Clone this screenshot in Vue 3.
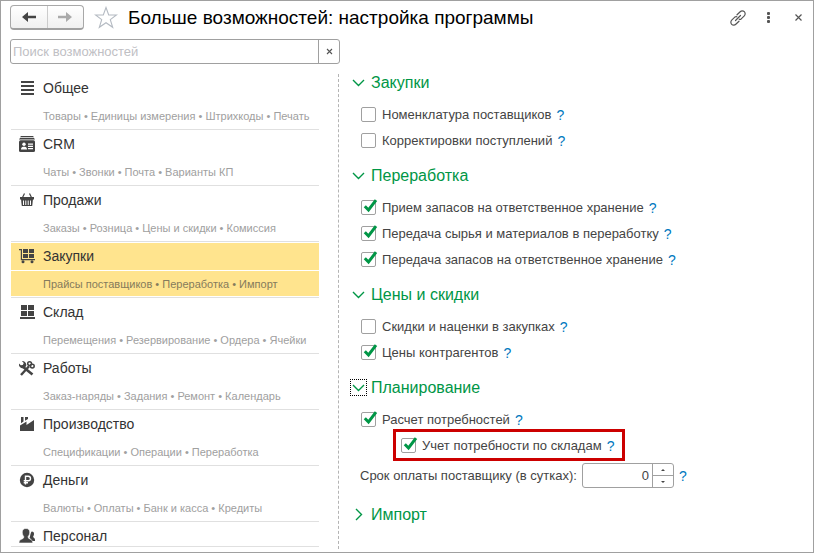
<script setup>
import { ref, reactive } from 'vue'

const query = ref('')
const active = ref('purchases')
const term = ref(0)

const categories = [
  { id: 'common', title: 'Общее', topics: ['Товары', 'Единицы измерения', 'Штрихкоды', 'Печать'] },
  { id: 'crm', title: 'CRM', topics: ['Чаты', 'Звонки', 'Почта', 'Варианты КП'] },
  { id: 'sales', title: 'Продажи', topics: ['Заказы', 'Розница', 'Цены и скидки', 'Комиссия'] },
  { id: 'purchases', title: 'Закупки', topics: ['Прайсы поставщиков', 'Переработка', 'Импорт'] },
  { id: 'stock', title: 'Склад', topics: ['Перемещения', 'Резервирование', 'Ордера', 'Ячейки'] },
  { id: 'works', title: 'Работы', topics: ['Заказ-наряды', 'Задания', 'Ремонт', 'Календарь'] },
  { id: 'production', title: 'Производство', topics: ['Спецификации', 'Операции', 'Переработка'] },
  { id: 'money', title: 'Деньги', topics: ['Валюты', 'Оплаты', 'Банк и касса', 'Кредиты'] },
  { id: 'staff', title: 'Персонал', topics: [] }
]

const sections = reactive([
  {
    id: 'buy', title: 'Закупки', open: true,
    options: [
      { id: 'nomenclature', label: 'Номенклатура поставщиков', on: false },
      { id: 'corrections', label: 'Корректировки поступлений', on: false }
    ]
  },
  {
    id: 'processing', title: 'Переработка', open: true,
    options: [
      { id: 'accept', label: 'Прием запасов на ответственное хранение', on: true },
      { id: 'raw', label: 'Передача сырья и материалов в переработку', on: true },
      { id: 'transfer', label: 'Передача запасов на ответственное хранение', on: true }
    ]
  },
  {
    id: 'prices', title: 'Цены и скидки', open: true,
    options: [
      { id: 'discounts', label: 'Скидки и наценки в закупках', on: false },
      { id: 'partner-prices', label: 'Цены контрагентов', on: true }
    ]
  },
  {
    id: 'planning', title: 'Планирование', open: true, current: true, hasTerm: true,
    options: [
      { id: 'needs', label: 'Расчет потребностей', on: true },
      { id: 'needs-by-stock', label: 'Учет потребности по складам', on: true, nested: true }
    ]
  },
  { id: 'import', title: 'Импорт', open: false, options: [] }
])
</script>

<template>
  <div class="window">
    <header class="titlebar">
      <div class="history">
        <button type="button" aria-label="Назад">
          <svg width="14" height="12" viewBox="0 0 14 12"><path d="M0 6 6 1v3.8h8v2.4H6V11z" fill="#444" /></svg>
        </button>
        <button type="button" aria-label="Вперед">
          <svg width="14" height="12" viewBox="0 0 14 12"><path d="M14 6 8 1v3.8H0v2.4h8V11z" fill="#aaa" /></svg>
        </button>
      </div>
      <button type="button" class="star" aria-label="В избранное">
        <svg width="24" height="23" viewBox="0 0 24 23">
          <path d="M12 1.5 14.7 9H22.5L16.3 13.6 18.7 21.3 12 16.7 5.3 21.3 7.7 13.6 1.5 9H9.3z" fill="#fff" stroke="#b4bac2" stroke-width="1.1" />
        </svg>
      </button>
      <h1>Больше возможностей: настройка программы</h1>
      <div class="tools">
        <button type="button" aria-label="Ссылка">
          <svg width="16" height="16" viewBox="0 0 16 16" fill="none" stroke="#555" stroke-width="1.2" stroke-linecap="round">
            <path d="M7 4.8 10.2 1.7A2.8 2.8 0 0 1 14.3 5.8L11.2 8.9Q10.2 9.6 9.2 9.2" />
            <path d="M9 11.2 5.8 14.3A2.8 2.8 0 0 1 1.7 10.2L4.8 7.1Q5.800 6.400 6.800 6.800" />
            <path d="M5.500 10.500 10.500 5.500" />
          </svg>
        </button>
        <button type="button" aria-label="Еще">
          <svg width="16" height="16" viewBox="0 0 16 16" fill="#555">
            <rect x="7" y="2" width="3" height="3" rx="1" /><rect x="7" y="6" width="3" height="3" rx="1" /><rect x="7" y="10" width="3" height="3" rx="1" />
          </svg>
        </button>
        <button type="button" aria-label="Закрыть">
          <svg width="16" height="16" viewBox="0 0 16 16"><path d="M5.500 4.500 11.500 10.500M11.500 4.500 5.500 10.500" stroke="#555" stroke-width="1.200" /></svg>
        </button>
      </div>
    </header>

    <div class="search">
      <input v-model="query" type="text" placeholder="Поиск возможностей" aria-label="Поиск возможностей" />
      <button type="button" aria-label="Очистить" @click="query = ''">
        <svg width="7" height="7" viewBox="0 0 7 7"><path d="M1 1 6 6M6 1 1 6" stroke="#555" stroke-width="1.100" /></svg>
      </button>
    </div>

    <main class="main">
      <nav class="sidebar">
        <ul>
          <li v-for="c in categories" :key="c.id" :class="{ active: c.id === active }">
            <a href="#" @click.prevent="active = c.id">
              <span class="name">
                <svg width="16" height="16" viewBox="0 0 16 16" fill="#444" aria-hidden="true">
                  <g v-if="c.id === 'common'">
                    <path d="M2 1h13v2H2zM2 5h13v2H2zM2 9h13v2H2zM2 13h13v2H2z" />
                  </g>
                  <g v-else-if="c.id === 'crm'">
                    <path d="M2 0h12l1 1.300H1z" /><path d="M1 2h14l1 1.500H0z" />
                    <rect y="4.300" width="16" height="11.700" rx="1.500" />
                    <circle cx="5" cy="8.300" r="1.700" fill="#fff" />
                    <path d="M2 13.500c0-2 1-2.500 2.200-2.800h1.600C7 11 8 11.500 8 13.500zM9 7.500h5v1.200H9zM9 9.700h5v1.200H9zM9 12h5v1.200H9z" fill="#fff" />
                  </g>
                  <g v-else-if="c.id === 'sales'">
                    <path d="M1 5h14v2.500H1z" />
                    <path d="M2 7h12l-.800 7H2.800z" />
                    <path d="M3.500 5.500 5.500 1.500M12.500 5.500 10.500 1.500" stroke="#444" stroke-width="1.200" />
                    <path d="M4 8.500h1V13H4zM6.300 8.500h1V13h-1zM8.700 8.500h1V13h-1zM11 8.500h1V13h-1z" fill="#fff" />
                  </g>
                  <g v-else-if="c.id === 'purchases'">
                    <path d="M0 1h3v10h13v1.300H1.800V2.200H0zM4 1h5v4H4zM10 1h5v4h-5zM4 6h5v4H4zM10 6h5v4h-5z" />
                    <circle cx="4" cy="13.700" r="1.500" /><circle cx="13" cy="13.700" r="1.500" />
                  </g>
                  <g v-else-if="c.id === 'stock'">
                    <path d="M2 1h6v5H2zM9 1h6v5H9zM2 7h6v5H2zM9 7h6v5H9zM1 13h15v2H1z" />
                  </g>
                  <g v-else-if="c.id === 'works'">
                    <path d="M4.200 7 13.500 14.500" stroke="#444" stroke-width="2.600" />
                    <path d="M0 3.500A3.800 3.800 0 0 0 4.500 8.200L6.800 6.500A3.600 3.600 0 0 0 3 1.200L4.800 3 3.800 5 1.800 5.200z" />
                    <path d="M2 15 10 6.200" stroke="#444" stroke-width="2.400" />
                    <circle cx="10.600" cy="3.600" r="1.900" fill="none" stroke="#444" stroke-width="1.500" />
                    <circle cx="13.300" cy="6.100" r="1.900" fill="none" stroke="#444" stroke-width="1.500" />
                  </g>
                  <g v-else-if="c.id === 'production'">
                    <path d="M1 15V9.500L7.500 5.500V9L15 4v11z" />
                    <path d="M2 1h2.500v4.500L2 7.300zM6 1h3v2L6 4.800z" />
                  </g>
                  <g v-else-if="c.id === 'money'">
                    <circle cx="8" cy="8" r="7.200" />
                    <path d="M6.500 12.500V4.200h2.700a2.200 2.200 0 0 1 0 4.600H4.700M4.700 10.700h4.300" fill="none" stroke="#fff" stroke-width="1.400" />
                  </g>
                  <g v-else>
                    <path d="M12.800 3.500c1.700 0 2.400 1.200 2.200 2.800-.100 1.100-.600 1.900-.900 2.300-.100 1.200 1.900 1.400 1.900 3.200V13h-3.800c0-1.700-.8-2.500-1.600-3 .500-1 .800-5.700 2.200-6.500z" />
                    <path d="M7 .5c2.800 0 4 1.700 3.700 4.200-.100 1.700-.800 2.900-1.500 3.600v1.400c.5 1.500 4.500 1.300 4.500 4.600v.7H0v-.7c0-3.300 4.200-3.100 4.700-4.600V8.300C4 7.600 3.400 6.400 3.300 4.700 3 2.200 4.200.5 7 .5z" stroke="#fff" stroke-width=".6" />
                  </g>
                </svg>
                {{ c.title }}
              </span>
              <span v-if="c.topics.length" class="topics">{{ c.topics.join(' • ') }}</span>
            </a>
          </li>
        </ul>
      </nav>

      <div class="settings">
        <section v-for="s in sections" :key="s.id">
          <h2>
            <button type="button" :aria-expanded="s.open" @click="s.open = !s.open">
              <span class="chevron" :class="{ current: s.current }">
                <svg width="13" height="13" viewBox="0 0 13 13" fill="none" stroke="#009646" stroke-width="1.400">
                  <path v-if="s.open" d="M1 4 6.500 9.500 12 4" />
                  <path v-else d="M4 1 9.500 6.500 4 12" />
                </svg>
              </span>
              {{ s.title }}
            </button>
          </h2>
          <div v-if="s.open" class="options">
            <div v-for="o in s.options" :key="o.id" class="option" :class="{ nested: o.nested }">
              <span class="box">
                <input :id="o.id" v-model="o.on" type="checkbox" />
                <svg v-if="o.on" class="tick" width="17" height="15" viewBox="0 0 17 15"><path d="M3.800 7.300 7.500 11 15 1.200" fill="none" stroke="#009646" stroke-width="3" /></svg>
              </span>
              <label :for="o.id">{{ o.label }}</label>
              <a href="#" class="help" @click.prevent>?</a>
            </div>
            <div v-if="s.hasTerm" class="term">
              <label for="term">Срок оплаты поставщику (в сутках):</label>
              <div class="spin">
                <input id="term" v-model.number="term" type="number" min="0" />
                <div class="steps">
                  <button type="button" aria-label="Больше" @click="term++">
                    <svg width="4" height="2" viewBox="0 0 4 2"><path d="M0 2 2 0 4 2z" fill="#444" /></svg>
                  </button>
                  <button type="button" aria-label="Меньше" @click="term = Math.max(0, term - 1)">
                    <svg width="4" height="2" viewBox="0 0 4 2"><path d="M0 0 2 2 4 0z" fill="#444" /></svg>
                  </button>
                </div>
              </div>
              <a href="#" class="help" @click.prevent>?</a>
            </div>
          </div>
        </section>
      </div>
    </main>
  </div>
</template>

<style>
body {
  margin: 0;
  background: #fff;
}
</style>

<style scoped>
.window {
  box-sizing: border-box;
  display: flex;
  flex-direction: column;
  height: 100vh;
  padding: 4px 7px 3px 9px;
  border: 1px solid #a0a0a0;
  background: #fff;
  color: #444;
  font-family: "Liberation Sans", Arial, sans-serif;
  font-size: 13px;
}

button,
input {
  font: inherit;
  color: inherit;
}

button {
  display: flex;
  align-items: center;
  justify-content: center;
  padding: 0;
  border: 0;
  background: none;
}

svg {
  flex: none;
  display: block;
}

a {
  color: inherit;
  text-decoration: none;
}

.titlebar {
  display: flex;
  align-items: center;
  height: 25px;
}

.history {
  box-sizing: border-box;
  display: flex;
  width: 74px;
  height: 25px;
  border: 1px solid #a8a8a8;
  border-bottom: 2px solid #a0a0a0;
  border-radius: 4px;
  background: linear-gradient(#fff, #f0f0f0);
}

.history button {
  flex: 1;
}

.history button + button {
  border-left: 1px solid #ccc;
}

.star {
  margin-left: 10px;
}

h1 {
  flex: 1;
  margin: 0 0 0 10px;
  color: #000;
  font-size: 19px;
  font-weight: 400;
  line-height: 24px;
  white-space: nowrap;
}

.tools {
  display: flex;
  gap: 14px;
}

.search {
  box-sizing: border-box;
  display: flex;
  flex: none;
  width: 330px;
  height: 25px;
  margin-top: 9px;
  border: 1px solid #a0a0a0;
  border-radius: 3px;
}

.search input {
  flex: 1;
  min-width: 0;
  padding: 0 2px;
  border: 0;
  outline: 0;
  background: none;
}

.search input::placeholder {
  color: #c0c0c4;
  opacity: 1;
}

.search button {
  width: 21px;
  border-left: 1px solid #a0a0a0;
}

.main {
  display: flex;
  flex: 1;
  min-height: 0;
  margin-top: 6px;
}

.sidebar {
  box-sizing: border-box;
  display: flex;
  flex: none;
  width: 329px;
  margin-top: 4px;
  padding: 0 19px 2px 1px;
  border-right: 1px dashed #b4b4b4;
}

.sidebar ul {
  flex: 1;
  margin: 0;
  padding: 0;
  overflow: hidden;
  border-bottom: 1px solid #e0e0e0;
  list-style: none;
}

.sidebar li {
  padding: 1px 0;
  border-bottom: 1px solid #e0e0e0;
}

.sidebar a {
  display: grid;
  gap: 1px;
}

.name {
  box-sizing: border-box;
  display: flex;
  align-items: center;
  gap: 8px;
  height: 27px;
  padding: 0 0 1px 8px;
  color: #333;
  font-size: 14px;
}

.topics {
  height: 25px;
  padding-left: 32px;
  color: #a0a0a0;
  font-size: 11px;
  line-height: 27px;
  white-space: nowrap;
}

.active .name,
.active .topics {
  background: #ffe48e;
}

.active .topics {
  color: #857b5c;
}

.settings {
  flex: 1;
  min-width: 0;
  padding-left: 11px;
}

section + section {
  margin-top: 10px;
}

h2 {
  margin: 0;
  color: #009646;
  font-size: 16px;
  font-weight: 400;
}

h2 button {
  gap: 4px;
  height: 25px;
}

.chevron {
  padding: 1px;
  border: 1px solid transparent;
}

.chevron.current {
  border: 1px dotted #000;
}

.options {
  display: grid;
  gap: 1px;
  justify-items: start;
  padding: 7px 0 0 11px;
}

.option {
  position: relative;
  display: flex;
  align-items: center;
  height: 25px;
  white-space: nowrap;
}

.box {
  position: relative;
  width: 15px;
  height: 15px;
  margin-right: 6px;
}

.box input {
  appearance: none;
  box-sizing: border-box;
  display: block;
  width: 15px;
  height: 15px;
  margin: 0;
  border: 1px solid #a0a0a0;
  border-radius: 2px;
  background: #fff;
}

.tick {
  position: absolute;
  top: -1px;
  left: 0;
  pointer-events: none;
}

.help {
  margin-left: 5px;
  color: #0078be;
  font-size: 14px;
}

.nested {
  margin-left: 40px;
}

.nested::after {
  position: absolute;
  inset: -4px -11px -3px -8px;
  border: 3px solid #cc0000;
  content: "";
  pointer-events: none;
}

.term {
  display: flex;
  align-items: center;
  height: 33px;
  margin-left: -1px;
  white-space: nowrap;
}

.spin {
  box-sizing: border-box;
  display: flex;
  width: 92px;
  height: 25px;
  margin-left: 5px;
  border: 1px solid #a0a0a0;
  border-radius: 3px;
}

.spin input {
  appearance: textfield;
  flex: 1;
  min-width: 0;
  padding: 0 3px;
  border: 0;
  outline: 0;
  background: none;
  text-align: right;
}

.spin input::-webkit-inner-spin-button {
  appearance: none;
  margin: 0;
}

.steps {
  display: flex;
  flex-direction: column;
  width: 20px;
  border-left: 1px solid #a0a0a0;
}

.steps button {
  flex: 1;
}

.steps button + button {
  border-top: 1px solid #a0a0a0;
}
</style>
